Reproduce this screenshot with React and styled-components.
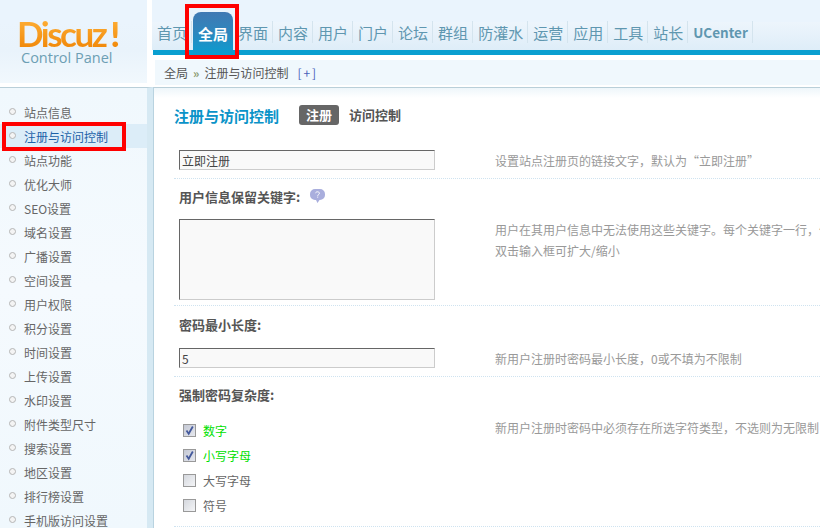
import React from "react";
import styled, { createGlobalStyle } from "styled-components";

const navItems = ["首页", "全局", "界面", "内容", "用户", "门户", "论坛", "群组", "防灌水", "运营", "应用", "工具", "站长"];
const sideItems = [
  "站点信息", "注册与访问控制", "站点功能", "优化大师", "SEO设置", "域名设置", "广播设置", "空间设置", "用户权限",
  "积分设置", "时间设置", "上传设置", "水印设置", "附件类型尺寸", "搜索设置", "地区设置", "排行榜设置", "手机版访问设置",
];
const checks = [
  { label: "数字", on: true },
  { label: "小写字母", on: true },
  { label: "大写字母", on: false },
  { label: "符号", on: false },
];

const App = () => {
  return (
    <Page>
      <GlobalStyle />
      <Side>
        <LogoArea>
          <LogoMark>Discuz<Bang>!</Bang></LogoMark>
          <LogoSub>Control Panel</LogoSub>
        </LogoArea>
        <SideMenu>
          {sideItems.map((item) => (
            <SideItem key={item} active={item === "注册与访问控制"}>
              <Bullet />
              {item}
            </SideItem>
          ))}
        </SideMenu>
      </Side>
      <Main>
        <Nav>
          {navItems.map((item) => (
            <NavItem key={item} active={item === "全局"}>{item}</NavItem>
          ))}
          <NavItem small>UCenter</NavItem>
        </Nav>
        <BlueBar />
        <Crumb>
          全局<CrumbArrow>»</CrumbArrow>注册与访问控制<CrumbAdd>[+]</CrumbAdd>
        </Crumb>
        <Content>
          <TitleRow>
            <Title>注册与访问控制</Title>
            <Tab active>注册</Tab>
            <Tab>访问控制</Tab>
          </TitleRow>

          <FirstRow>
            <FieldInput><TextBox>立即注册</TextBox></FieldInput>
            <Tip>设置站点注册页的链接文字，默认为“立即注册”</Tip>
          </FirstRow>

          <Label>
            用户信息保留关键字:
            <HelpIcon width="15" height="14" viewBox="0 0 15 14">
              <path d="M5 0h5a5 5 0 0 1 5 5v1a5 5 0 0 1-5 5H9.500L7.500 14 6 11H5a5 5 0 0 1-5-5V5a5 5 0 0 1 5-5z" fill="#a9aedd" />
              <path d="M5.500 4.200c.3-1 1.100-1.400 2-1.400 1.100 0 1.900.6 1.900 1.500 0 1.300-1.700 1.300-1.700 2.500" stroke="#fff" fill="none" />
              <rect x="7.200" y="7.600" width="1" height="1" fill="#fff" />
            </HelpIcon>
          </Label>
          <FieldRow short>
            <FieldInput><AreaBox /></FieldInput>
            <Tip>
              <TipLine>用户在其用户信息中无法使用这些关键字。每个关键字一行，例如</TipLine>
              <TipLine>双击输入框可扩大/缩小</TipLine>
            </Tip>
          </FieldRow>

          <Label tall>密码最小长度:</Label>
          <FieldRow>
            <FieldInput><TextBox>5</TextBox></FieldInput>
            <Tip>新用户注册时密码最小长度，0或不填为不限制</Tip>
          </FieldRow>

          <Label>强制密码复杂度:</Label>
          <FieldRow>
            <CheckList>
              {checks.map((c) => (
                <CheckRow key={c.label} on={c.on}>
                  <CheckBox on={c.on}>
                    {c.on && (
                      <svg width="11" height="11" viewBox="0 0 11 11">
                        <path d="M2.500 5.500l2.200 3.300L8.800 1.500" stroke="#44599c" strokeWidth="1.800" fill="none" />
                      </svg>
                    )}
                  </CheckBox>
                  {c.label}
                </CheckRow>
              ))}
            </CheckList>
            <Tip>新用户注册时密码中必须存在所选字符类型，不选则为无限制</Tip>
          </FieldRow>
        </Content>
      </Main>
      <Mark top />
      <Mark />
    </Page>
  );
};
export default App;

const GlobalStyle = createGlobalStyle`
  html, body {
    margin: 0;
    padding: 0;
    background: #fff;
  }
  * {
    box-sizing: border-box;
  }
`;

const Page = styled.div`
  position: relative;
  display: flex;
  width: 820px;
  height: 528px;
  overflow: hidden;
  font-family: "Noto Sans CJK SC", "Liberation Sans", sans-serif;
  font-size: 12px;
  color: #666;
`;

const Side = styled.div`
  width: 153px;
  flex: none;
  background: #fff;
`;

const LogoArea = styled.div`
  height: 87px;
  margin-right: 6px;
  padding: 16px 0 0 17px;
  background: linear-gradient(#eaf4fd 0, #eaf4fd 22px, #e9f3fb 50px, #f1f8fd 83px, #fff 83px);
`;

const LogoMark = styled.div`
  width: 110px;
  font-family: Lato, "Liberation Sans", sans-serif;
  font-size: 35px;
  font-weight: 700;
  line-height: 34px;
  letter-spacing: -2.500px;
  white-space: nowrap;
  background: linear-gradient(#ffb23a, #f08606);
  -webkit-background-clip: text;
  background-clip: text;
  color: transparent;
`;

const Bang = styled.span`
  margin-left: 5px;
  font-weight: 900;
`;

const LogoSub = styled.div`
  margin-left: 4px;
  font-family: "Open Sans", "Liberation Sans", sans-serif;
  font-size: 14.500px;
  line-height: 16px;
  color: #6d9fb4;
`;

const SideMenu = styled.div`
  height: 441px;
  padding-top: 12px;
  border-top: 1px solid #b9cfd9;
  border-right: 6px solid #d6e9f3;
  background: linear-gradient(#f0f8fd, #f5fafe 200px, #f0f8fd);
`;

const SideItem = styled.div`
  display: flex;
  align-items: center;
  gap: 8px;
  height: 24px;
  padding-left: 9px;
  color: ${(props) => (props.active ? "#1c62a8" : "#666")};
  background: ${(props) => (props.active ? "#dcedf8" : "transparent")};
`;

const Bullet = styled.span`
  width: 7px;
  height: 7px;
  margin-top: -2px;
  border: 1px solid #b5b5b5;
  border-radius: 50%;
  background: #f4f4f4;
`;

const Main = styled.div`
  flex: 1;
  min-width: 0;
`;

const Nav = styled.div`
  display: flex;
  align-items: flex-end;
  height: 50px;
  margin-left: -1px;
  background: linear-gradient(#eaf4fd 0, #eaf4fd 22px, #edf5fc 22px, #deedf8 50px);
`;

const NavItem = styled.div`
  display: flex;
  align-items: center;
  justify-content: center;
  height: 22px;
  margin-bottom: 7px;
  padding: 0 4px 0 5px;
  border-right: 1px solid #d4e4ee;
  font-size: ${(props) => (props.small ? "13.500px" : "15px")};
  font-weight: ${(props) => (props.small ? "700" : "400")};
  color: #5f97b0;
  white-space: nowrap;

  ${(props) => props.active && `
    height: 43px;
    margin-bottom: -5px;
    margin-left: 1px;
    padding: 0 5px;
    border-right: 0;
    border-radius: 8px 8px 0 0;
    background: linear-gradient(#4079b3, #2f86bd 45%, #0a9dd0);
    color: #fff;
    font-weight: 700;
  `}
`;

const BlueBar = styled.div`
  height: 5px;
  background: #0a9fd0;
`;

const Crumb = styled.div`
  display: flex;
  align-items: center;
  height: 25px;
  margin: 5px 0 0 2px;
  padding-left: 9px;
  background: #f0f8fd;
  color: #555;
`;

const CrumbArrow = styled.span`
  margin: 0 5px;
  color: #8a9a70;
  font-weight: 700;
`;

const CrumbAdd = styled.span`
  margin-left: 9px;
  letter-spacing: 2px;
  color: #4a62b8;
`;

const Content = styled.div`
  height: 441px;
  margin-top: 2px;
  padding: 10px 0 0 20px;
  border-top: 1px solid #b9cfd9;
  border-left: 1px solid #b9d3e0;
  background: linear-gradient(#eef6fa, #fff 10px);
`;

const TitleRow = styled.div`
  display: flex;
  align-items: center;
  height: 20px;
  margin: 7px 0 25px;
`;

const Title = styled.div`
  width: 125px;
  font-size: 15px;
  font-weight: 700;
  color: #0a93c8;
`;

const Tab = styled.div`
  height: 20px;
  padding: 0 ${(props) => (props.active ? "7px" : "10px")};
  border-radius: 3px;
  font-size: 13px;
  font-weight: 700;
  line-height: 20px;
  color: ${(props) => (props.active ? "#fff" : "#555")};
  background: ${(props) => (props.active ? "#666" : "transparent")};
`;

const FieldRow = styled.div`
  display: flex;
  align-items: flex-start;
  margin-top: 4px;
  padding: 0 0 ${(props) => (props.short ? "5px" : "8px")} 5px;
  border-bottom: 1px dotted #cfe3f0;
`;

const FirstRow = styled(FieldRow)`
  margin-top: 0;
`;

const FieldInput = styled.div`
  width: 316px;
  flex: none;
`;

const TextBox = styled.div`
  width: 256px;
  height: 20px;
  padding: 0 0 0 2px;
  border: 1px solid #ccc;
  border-top-color: #666;
  border-left-color: #666;
  background: #f9f9f9;
  font-size: 12px;
  line-height: 20px;
  color: #444;
`;

const AreaBox = styled(TextBox)`
  height: 81px;
`;

const Tip = styled.div`
  flex: 1;
  min-width: 0;
  margin-bottom: -1px;
  color: #999;
  line-height: 21px;
  white-space: nowrap;
  overflow: hidden;
`;

const TipLine = styled.div``;

const Label = styled.div`
  display: flex;
  align-items: center;
  height: ${(props) => (props.tall ? "38px" : "36px")};
  padding: 0 0 2px 5px;
  font-size: 13px;
  font-weight: 700;
  color: #555;
`;

const HelpIcon = styled.svg`
  margin-left: 10px;
`;

const CheckList = styled.div`
  width: 316px;
  flex: none;
  padding-top: 1px;
`;

const CheckRow = styled.div`
  display: flex;
  align-items: center;
  gap: 7px;
  height: 25px;
  padding-left: 4px;
  color: ${(props) => (props.on ? "#00e000" : "#666")};
`;

const CheckBox = styled.span`
  display: flex;
  align-items: center;
  justify-content: center;
  width: 13px;
  height: 13px;
  border: 1px solid #999;
  background: ${(props) => (props.on
    ? "linear-gradient(135deg, #c4c8d4, #e6e8ee)"
    : "linear-gradient(135deg, #d5d8de, #f4f5f7)")};
`;

const Mark = styled.div`
  position: absolute;
  border: 4px solid #f00;
  ${(props) => props.top
    ? "left: 185px; top: 4px; width: 54px; height: 55px;"
    : "left: 2px; top: 122px; width: 124px; height: 29px;"}
`;
